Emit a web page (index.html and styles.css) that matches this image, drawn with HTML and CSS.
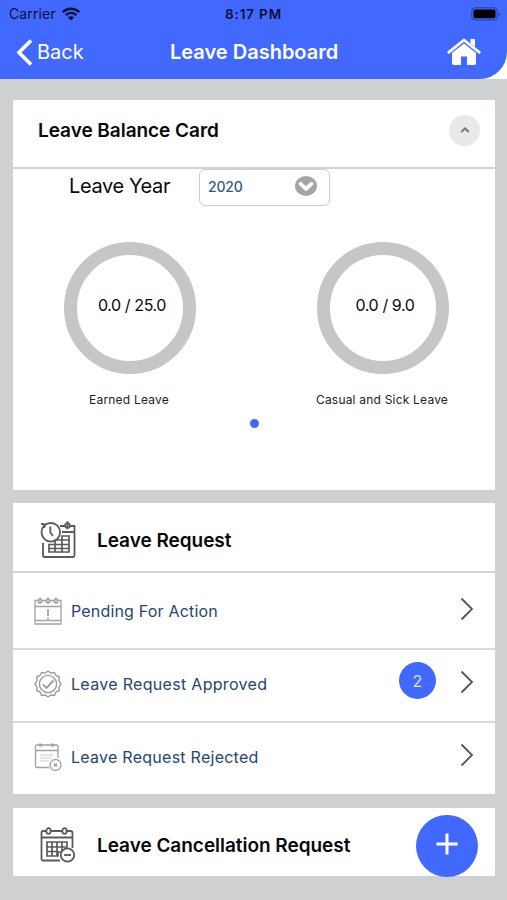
FILE: index.html
```html
<!DOCTYPE html>
<html lang="en">
<head>
<meta charset="utf-8">
<title>Leave Dashboard</title>
<link rel="stylesheet" href="styles.css">
</head>
<body>
<div class="top">
  <header class="header">
    <div class="status">
      <div class="carrier"><span class="carrier-name">Carrier</span>
        <svg width="18" height="14" viewBox="0 0 18 14"><g fill="none" stroke="#0a1030" stroke-width="2.4"><path d="M.8 5.1C5.4.7 12.600.7 17.200 5.100"/><path d="M3.700 8.200C6.800 5.200 11.200 5.200 14.300 8.200"/></g><path d="M9 13.600L5.900 10.500C7.700 8.900 10.300 8.900 12.100 10.500Z" fill="#0a1030"/></svg>
      </div>
      <div class="time">8:17 PM</div>
      <svg class="battery" width="30" height="14" viewBox="0 0 30 14"><rect x=".8" y=".8" width="25.400" height="12.200" rx="3.500" fill="none" stroke="#263c98" stroke-width="1"/><rect x="2.500" y="2.500" width="22" height="8.800" rx="1.800" fill="#000"/><path d="M27.700 5v4q1.500-.8 1.500-2t-1.500-2" fill="#263c98"/></svg>
    </div>
    <nav class="nav">
      <div class="back"><svg width="17" height="27" viewBox="0 0 17 27"><path d="M15 1.500L3 13.500L15 25.500" fill="none" stroke="#fff" stroke-width="3.600"/></svg><span>Back</span></div>
      <h1 class="title">Leave Dashboard</h1>
      <svg class="home" width="34" height="28" viewBox="0 0 34 28"><path d="M1.700 14.300L17 2L32.300 14.300" fill="none" stroke="#fff" stroke-width="2.800" stroke-linecap="round" stroke-linejoin="round"/><path d="M23.500 1h4.500v8l-4.500-3.700Z" fill="#fff"/><path d="M17 5.500L29 15V25q0 2-2 2H20v-8.500h-6V27H7q-2 0-2-2v-10Z" fill="#fff"/></svg>
    </nav>
  </header>
</div>
<main class="content">
  <section class="card balance">
    <div class="balance-head"><h2 class="balance-title">Leave Balance Card</h2><div class="collapse"><svg width="10" height="8" viewBox="0 0 10 8"><path d="M1.300 6L5 2.300L8.700 6" fill="none" stroke="#777" stroke-width="2"/></svg></div></div>
    <div class="year-row">
      <span class="year-label">Leave Year</span>
      <div class="select"><span>2020</span><svg width="22" height="20" viewBox="0 0 22 20"><ellipse cx="11" cy="10" rx="11" ry="10" fill="#a5a5a5"/><path d="M5.600 7.800L11 12.800L16.400 7.800" fill="none" stroke="#fff" stroke-width="3.800" stroke-linecap="round" stroke-linejoin="round"/></svg></div>
    </div>
    <div class="gauges">
      <div class="gauge"><div class="ring earned">0.0 / 25.0</div><div class="caption cap-earned">Earned Leave</div></div>
      <div class="gauge"><div class="ring casual">0.0 / 9.0</div><div class="caption cap-casual">Casual and Sick Leave</div></div>
    </div>
    <div class="dot"></div>
  </section>
  <section class="card requests">
    <div class="section-head">
      <svg class="section-icon" width="36" height="38" viewBox="0 0 36 38"><g fill="none" stroke="#5a5a5a" stroke-width="1.800"><path d="M20 5H25M30 5H34.500V34.500Q34.500 36 33 36H4.500Q3 36 3 34.500V22M22 11H34.500"/><circle cx="27.500" cy="4.500" r="2.300"/><path d="M27.500.3v8"/><circle cx="10.800" cy="11.300" r="9.300"/><path d="M10.300 5.500V11.500L13 15"/><path d="M1 2.700L5 3.600L4 7" stroke-width="2"/><path d="M9 23.500H15V19H22V15H29V31H9ZM15 23.500V31M22 19V31M15 23.500H29M9 27.500H29M22 19H29" stroke-width="1.700"/></g></svg>
      <h2 class="request-title">Leave Request</h2>
    </div>
    <div class="row pending">
      <svg class="row-icon" width="28" height="28" viewBox="0 0 28 28"><g fill="none" stroke="#a2a2a2" stroke-width="1.300"><path d="M3.500 3.500H1V27H27V3.500H24.500M8 3.500H12M16 3.500H20M1 9.500H27M1 23.500H27"/><circle cx="6" cy="4" r="2"/><circle cx="14" cy="4" r="2"/><circle cx="22" cy="4" r="2"/><path d="M6 .5V7M14 .5V7M22 .5V7"/><path d="M14 12V19M14 20.500V22.500" stroke-width="1.700"/></g></svg>
      <span class="row-label pending-label">Pending For Action</span>
      <svg class="chevron" width="14" height="24" viewBox="0 0 14 24"><path d="M1.500 1.500L12 12L1.500 22.500" fill="none" stroke="#555" stroke-width="1.800"/></svg>
    </div>
    <div class="row approved">
      <svg class="row-icon" width="28" height="28" viewBox="0 0 28 28"><g fill="none" stroke="#9c9c9c" stroke-width="1.400"><path d="M14 1L17 3L20.500 2.500L22 5.500L25.300 7L25 10.500L27 14L25 17L25.300 20.500L22 22L20.500 25.500L17 25L14 27L11 25L7.500 25.500L6 22L2.700 20.500L3 17L1 14L3 10.500L2.700 7L6 5.500L7.500 2.500L11 3Z"/><circle cx="14" cy="14" r="8.600"/><path d="M9 14.500L12.600 18L19.500 10.500" stroke-width="1.900"/></g></svg>
      <span class="row-label approved-label">Leave Request Approved</span>
      <span class="count">2</span>
      <svg class="chevron" width="14" height="24" viewBox="0 0 14 24"><path d="M1.500 1.500L12 12L1.500 22.500" fill="none" stroke="#555" stroke-width="1.800"/></svg>
    </div>
    <div class="row rejected">
      <svg class="row-icon" width="28" height="28" viewBox="0 0 28 28"><g fill="none" stroke="#a0a0a0" stroke-width="1.300"><path d="M24 15V3.500Q24 2 22.500 2H3Q1.500 2 1.500 3.500V23Q1.500 24.500 3 24.500H15M1.500 7.500H24"/><path d="M6.500.5V3.500M18.500.5V3.500" stroke-width="3"/><path d="M6 12H19M6 15H18M6 18H15" stroke="#ddd" stroke-width="1.500"/><circle cx="21.500" cy="22" r="5.500" fill="#fff"/><path d="M20 20.500L23 23.500M23 20.500L20 23.500" stroke-width="1.500"/></g></svg>
      <span class="row-label rejected-label">Leave Request Rejected</span>
      <svg class="chevron" width="14" height="24" viewBox="0 0 14 24"><path d="M1.500 1.500L12 12L1.500 22.500" fill="none" stroke="#555" stroke-width="1.800"/></svg>
    </div>
  </section>
  <section class="card cancellation">
    <div class="section-head">
      <svg class="section-icon" width="36" height="36" viewBox="0 0 36 36"><g fill="none" stroke="#5a5a5a" stroke-width="1.800"><path d="M6 4H3Q1.500 4 1.500 5.500V32Q1.500 33.500 3 33.500H20M11 4H22M27 4H30.500Q32.500 4 32.500 6V21M1.500 10.500H32.500"/><ellipse cx="8.500" cy="4" rx="2.200" ry="2.900"/><ellipse cx="24.500" cy="4" rx="2.200" ry="2.900"/><path d="M7 15H27V20H22V25H18V29H7ZM12 15V29M17 15V29M22 15V20M7 20H22M7 24.500H18" stroke-width="1.700"/><circle cx="27.500" cy="28" r="6.700" fill="#fff"/><path d="M24 28H31"/></g></svg>
      <h2 class="cancel-title">Leave Cancellation Request</h2>
    </div>
  </section>
</main>
<button class="add" aria-label="Add"><svg width="22" height="22" viewBox="0 0 22 22"><path d="M11 .5V21.500M.5 11H21.500" stroke="#fff" stroke-width="3"/></svg></button>
</body>
</html>
```
FILE: styles.css
```css
* { box-sizing: border-box; }
body { margin: 0; width: 507px; height: 900px; overflow: hidden; position: relative; background: #ced0d2; font-family: Inter, "Liberation Sans", sans-serif; color: #090909; }
h1, h2 { margin: 0; font-weight: 600; white-space: nowrap; }
svg { display: block; flex: none; }
.top { background: #fff; height: 79px; }
.header { height: 79px; background: #4168ff; border-radius: 0 0 27px 0; }
.status { height: 27px; display: grid; grid-template-columns: 1fr 60px 1fr; align-items: center; color: #0a1030; }
.carrier { display: flex; align-items: center; gap: 6px; padding-left: 9px; }
.carrier-name { font-size: 14px; letter-spacing: .1px; }
.time { font-size: 13.5px; font-weight: 600; letter-spacing: .85px; text-align: center; white-space: nowrap; }
.battery { justify-self: end; margin-right: 6px; }
.nav { height: 50px; padding: 0 26px 0 16px; display: grid; grid-template-columns: 154px 1fr 34px; align-items: center; color: #fff; }
.back { display: flex; align-items: center; gap: 4px; font-size: 20px; }
.title { font-size: 20px; }
.content { padding: 21px 12px 0 13px; }
.card { background: #fff; }
.balance { height: 390px; }
.balance-head { height: 69px; padding: 0 15px 7px 25px; display: flex; align-items: center; justify-content: space-between; border-bottom: 2px solid #d3d4d5; }
.balance-title, .request-title, .cancel-title { font-size: 19px; }
.balance-title { letter-spacing: -.04px; }
.request-title, .cancel-title { margin: 2px 0 0 1px; letter-spacing: -.03px; }
.collapse { width: 31px; height: 31px; border-radius: 50%; background: #e9e9e9; display: grid; place-items: center; }
.year-row { height: 38px; padding-left: 56px; display: flex; }
.year-label { width: 130px; font-size: 20px; line-height: 34px; letter-spacing: -.38px; }
.select { width: 131px; height: 37px; border: 1.5px solid #ccc; border-radius: 6px; display: flex; align-items: center; justify-content: space-between; padding: 0 12px 3px 8px; font-size: 14px; font-weight: 500; letter-spacing: -.15px; color: #345788; }
.gauges { display: flex; justify-content: space-between; padding: 35px 46px 0 51px; }
.gauge { width: 132px; display: flex; flex-direction: column; align-items: center; }
.ring { width: 132px; height: 132px; border: 13px solid #c6c6c6; border-radius: 50%; font-size: 16px; letter-spacing: -.4px; display: flex; align-items: center; justify-content: center; padding: 0 0 7px 4px; white-space: nowrap; }
.caption { margin-top: 18px; font-size: 12px; line-height: 16px; letter-spacing: .2px; white-space: nowrap; color: #222; position: relative; left: -1px; }
.dot { width: 9px; height: 9px; border-radius: 50%; background: #4168ff; margin: 11px auto 0; }
.requests { height: 291px; margin-top: 13px; }
.section-head { display: flex; align-items: center; gap: 20px; height: 68px; padding: 5px 0 0 27px; }
.requests .section-head { height: 70px; border-bottom: 2px solid #d3d4d5; }
.row { display: flex; align-items: center; padding: 0 21px 4px 21px; height: 73px; border-bottom: 2px solid #d9dadb; }
.row.pending { height: 77px; padding-bottom: 0; }
.row.rejected { height: 71px; padding-bottom: 3px; border: 0; }
.row-label { margin-left: 9px; flex: 1; font-size: 16px; color: #244674; white-space: nowrap; }
.pending-label { letter-spacing: .18px; }
.approved-label { letter-spacing: .31px; }
.rejected-label { letter-spacing: .26px; }
.count { width: 37px; height: 37px; border-radius: 50%; background: #4168ff; color: #dce4ff; font-size: 16px; display: grid; place-items: center; margin: 0 24px 6px 0; }
.chevron { margin-bottom: 4px; }
.cancellation { height: 68px; margin-top: 14px; }
.add { position: absolute; left: 416px; top: 815px; width: 62px; height: 62px; border: 0; border-radius: 50%; background: #4168ff; display: grid; place-items: center; padding: 0 1px 5px 0; }
```
